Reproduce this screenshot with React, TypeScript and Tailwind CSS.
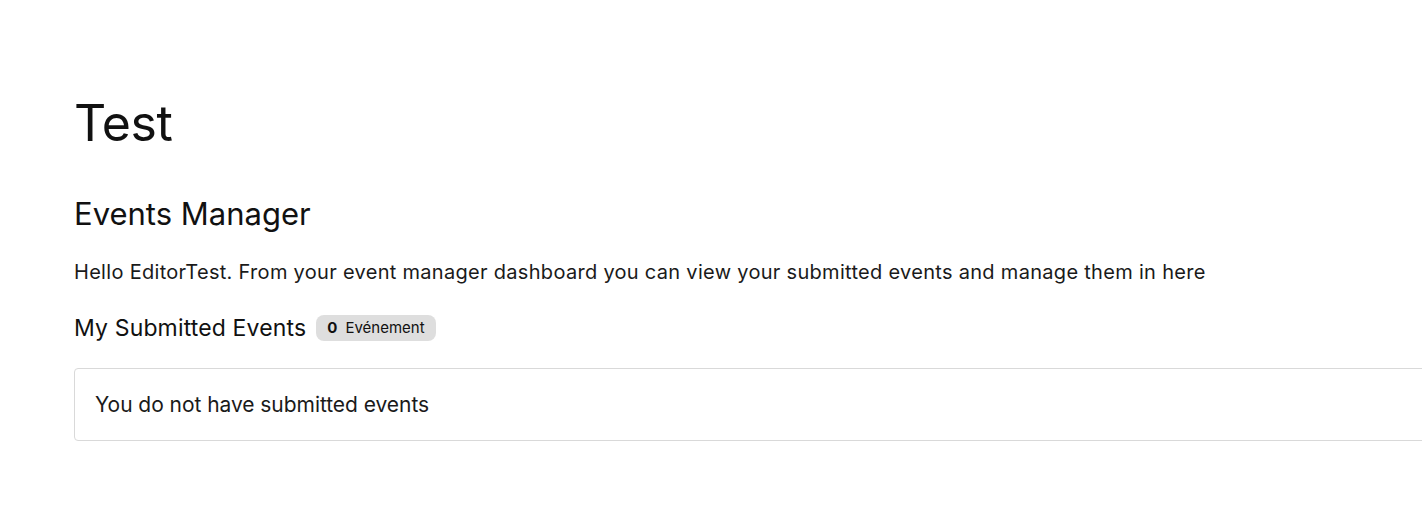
import React from 'react'

const App = () => {
  return (
    <div className="min-h-screen w-full overflow-hidden bg-white text-[#111] font-['Inter',sans-serif]">
      <div className="pl-[74px] pt-[92px] w-[1500px]">
        <h1 className="text-[50px] leading-[62px] font-normal tracking-[-0.5px]">Test</h1>

        <h2 className="mt-[40px] text-[31px] leading-[40px] font-normal">Events Manager</h2>

        <p className="mt-[24px] text-[20px] leading-[28px] tracking-[0.3px] text-[#1a1a1a]">
          Hello EditorTest. From your event manager dashboard you can view your submitted events and manage them in here
        </p>

        <div className="mt-[27px] flex items-center gap-[10px]">
          <span className="text-[23px] leading-[30px] tracking-[0.15px]">My Submitted Events</span>
          <span className="flex items-center gap-[8px] rounded-[8px] bg-[#dedede] px-[11px] h-[26px] text-[15px]">
            <span className="font-bold">0</span>
            <span>Evénement</span>
          </span>
        </div>

        <div className="mt-[25px] rounded-[4px] border border-[#d9d9d9] px-[20px] h-[73px] flex items-center">
          <span className="text-[21px] tracking-[-0.05px] text-[#1a1a1a]">You do not have submitted events</span>
        </div>
      </div>
    </div>
  )
}

export default App
